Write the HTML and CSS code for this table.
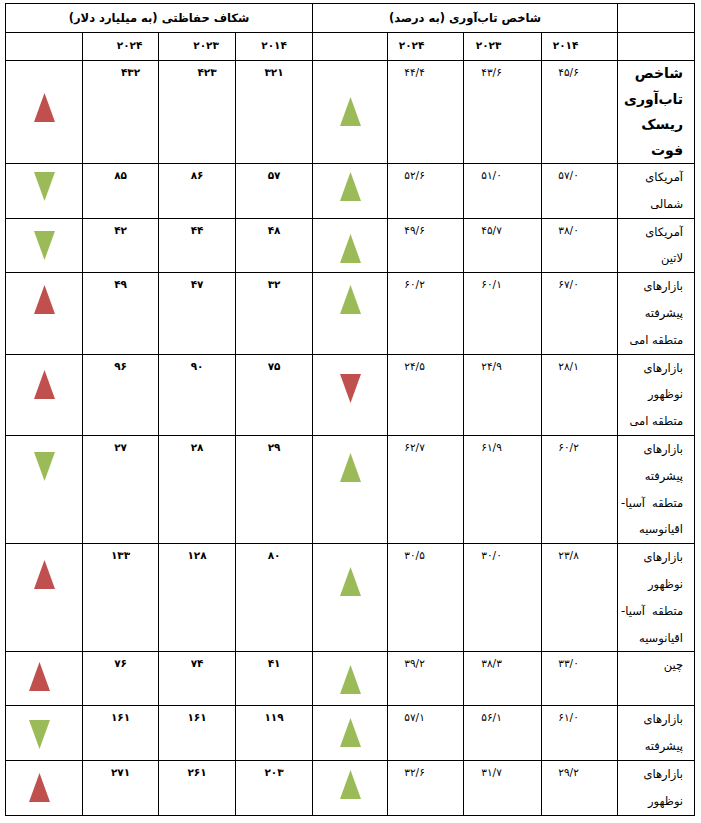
FILE: index.html
```html
<!DOCTYPE html>
<html lang="fa">
<head>
<meta charset="utf-8">
<title>شاخص تاب‌آوری</title>
<link rel="stylesheet" href="styles.css">
</head>
<body>
<table class="grid" dir="rtl">
  <colgroup>
    <col class="w77"><col class="w76"><col class="w78"><col class="w76"><col class="w75">
    <col class="w77"><col class="w77"><col class="w76"><col class="w77">
  </colgroup>
  <tr class="h1">
    <th></th>
    <th colspan="4" class="group">شاخص تاب‌آوری (به درصد)</th>
    <th colspan="4" class="group">شکاف حفاظتی (به میلیارد دلار)</th>
  </tr>
  <tr class="h2">
    <th></th>
    <th class="yr yr-r">۲۰۱۴</th><th class="yr yr-r">۲۰۲۳</th><th class="yr yr-r">۲۰۲۴</th>
    <th></th>
    <th class="yr">۲۰۱۴</th><th class="yr yr-s">۲۰۲۳</th><th class="yr yr-s">۲۰۲۴</th>
    <th></th>
  </tr>
  <tr>
    <td class="lbl lbl-b">شاخص<br>تاب‌آوری<br>ریسک<br>فوت</td>
    <td class="nr">۴۵/۶</td><td class="nr">۴۳/۶</td><td class="nr">۴۴/۴</td>
    <td class="arr p36"><svg class="tri g" viewBox="0 0 21 29"><polygon points="10.5,0 21,29 0,29"/></svg></td>
    <td class="nl">۳۲۱</td><td class="nl nl-s">۴۲۳</td><td class="nl nl-s">۴۳۲</td>
    <td class="arr p32"><svg class="tri r" viewBox="0 0 21 29"><polygon points="10.5,0 21,29 0,29"/></svg></td>
  </tr>
  <tr>
    <td class="lbl">آمریکای<br>شمالی</td>
    <td class="nr">۵۷/۰</td><td class="nr">۵۱/۰</td><td class="nr">۵۲/۶</td>
    <td class="arr p8"><svg class="tri g" viewBox="0 0 21 29"><polygon points="10.5,0 21,29 0,29"/></svg></td>
    <td class="nl">۵۷</td><td class="nl">۸۶</td><td class="nl">۸۵</td>
    <td class="arr p8"><svg class="tri g" viewBox="0 0 21 29"><polygon points="0,0 21,0 10.5,29"/></svg></td>
  </tr>
  <tr>
    <td class="lbl">آمریکای<br>لاتین</td>
    <td class="nr">۳۸/۰</td><td class="nr">۴۵/۷</td><td class="nr">۴۹/۶</td>
    <td class="arr p15"><svg class="tri g" viewBox="0 0 21 29"><polygon points="10.5,0 21,29 0,29"/></svg></td>
    <td class="nl">۴۸</td><td class="nl">۴۴</td><td class="nl">۴۲</td>
    <td class="arr p12"><svg class="tri g" viewBox="0 0 21 29"><polygon points="0,0 21,0 10.5,29"/></svg></td>
  </tr>
  <tr>
    <td class="lbl">بازارهای<br>پیشرفته<br>متطقه امی</td>
    <td class="nr">۶۷/۰</td><td class="nr">۶۰/۱</td><td class="nr">۶۰/۲</td>
    <td class="arr p12"><svg class="tri g" viewBox="0 0 21 29"><polygon points="10.5,0 21,29 0,29"/></svg></td>
    <td class="nl">۳۲</td><td class="nl">۴۷</td><td class="nl">۴۹</td>
    <td class="arr p12"><svg class="tri r" viewBox="0 0 21 29"><polygon points="10.5,0 21,29 0,29"/></svg></td>
  </tr>
  <tr>
    <td class="lbl">بازارهای<br>نوظهور<br>متطقه امی</td>
    <td class="nr">۲۸/۱</td><td class="nr">۲۴/۹</td><td class="nr">۲۴/۵</td>
    <td class="arr p19"><svg class="tri r" viewBox="0 0 21 29"><polygon points="0,0 21,0 10.5,29"/></svg></td>
    <td class="nl">۷۵</td><td class="nl">۹۰</td><td class="nl">۹۶</td>
    <td class="arr p15"><svg class="tri r" viewBox="0 0 21 29"><polygon points="10.5,0 21,29 0,29"/></svg></td>
  </tr>
  <tr>
    <td class="lbl">بازارهای<br>پیشرفته<br><span class="just">متطقه آسیا-</span>اقیانوسیه</td>
    <td class="nr">۶۰/۲</td><td class="nr">۶۱/۹</td><td class="nr">۶۲/۷</td>
    <td class="arr p17"><svg class="tri g" viewBox="0 0 21 29"><polygon points="10.5,0 21,29 0,29"/></svg></td>
    <td class="nl">۲۹</td><td class="nl">۲۸</td><td class="nl">۲۷</td>
    <td class="arr p16"><svg class="tri g" viewBox="0 0 21 29"><polygon points="0,0 21,0 10.5,29"/></svg></td>
  </tr>
  <tr>
    <td class="lbl">بازارهای<br>نوظهور<br><span class="just">متطقه آسیا-</span>اقیانوسیه</td>
    <td class="nr">۲۳/۸</td><td class="nr">۳۰/۰</td><td class="nr">۳۰/۵</td>
    <td class="arr p23"><svg class="tri g" viewBox="0 0 21 29"><polygon points="10.5,0 21,29 0,29"/></svg></td>
    <td class="nl">۸۰</td><td class="nl">۱۲۸</td><td class="nl">۱۳۳</td>
    <td class="arr p16"><svg class="tri r" viewBox="0 0 21 29"><polygon points="10.5,0 21,29 0,29"/></svg></td>
  </tr>
  <tr class="two">
    <td class="lbl">چین</td>
    <td class="nr">۳۳/۰</td><td class="nr">۳۸/۳</td><td class="nr">۳۹/۲</td>
    <td class="arr p13"><svg class="tri g" viewBox="0 0 21 29"><polygon points="10.5,0 21,29 0,29"/></svg></td>
    <td class="nl">۴۱</td><td class="nl">۷۴</td><td class="nl">۷۶</td>
    <td class="arr p10 shift"><svg class="tri r" viewBox="0 0 21 29"><polygon points="10.5,0 21,29 0,29"/></svg></td>
  </tr>
  <tr>
    <td class="lbl">بازارهای<br>پیشرفته</td>
    <td class="nr">۶۱/۰</td><td class="nr">۵۶/۱</td><td class="nr">۵۷/۱</td>
    <td class="arr p12"><svg class="tri g" viewBox="0 0 21 29"><polygon points="10.5,0 21,29 0,29"/></svg></td>
    <td class="nl">۱۱۹</td><td class="nl">۱۶۱</td><td class="nl">۱۶۱</td>
    <td class="arr p14 shift"><svg class="tri g" viewBox="0 0 21 29"><polygon points="0,0 21,0 10.5,29"/></svg></td>
  </tr>
  <tr>
    <td class="lbl">بازارهای<br>نوظهور</td>
    <td class="nr">۲۹/۲</td><td class="nr">۳۱/۷</td><td class="nr">۳۲/۶</td>
    <td class="arr p9"><svg class="tri g" viewBox="0 0 21 29"><polygon points="10.5,0 21,29 0,29"/></svg></td>
    <td class="nl">۲۰۳</td><td class="nl">۲۶۱</td><td class="nl">۲۷۱</td>
    <td class="arr p12 shift"><svg class="tri r" viewBox="0 0 21 29"><polygon points="10.5,0 21,29 0,29"/></svg></td>
  </tr>
</table>
</body>
</html>
```

FILE: styles.css
```css
html, body {
  margin: 0;
  padding: 0;
  background: #ffffff;
}

body {
  padding: 3px 0 0 5px;
  font-family: "DejaVu Sans", "Noto Sans", sans-serif;
  color: #000;
}

.grid {
  border-collapse: collapse;
  table-layout: fixed;
  width: 689px;
}

.w75 { width: 75px; }
.w76 { width: 76px; }
.w77 { width: 77px; }
.w78 { width: 78px; }

.grid th,
.grid td {
  border: 1px solid #000;
  padding: 0;
  vertical-align: top;
  font-weight: normal;
}

.h1 { height: 29px; }
.h2 { height: 28px; }

.grid .group {
  font-weight: bold;
  font-size: 11.5px;
  text-align: center;
  vertical-align: middle;
}

.grid .yr {
  font-size: 10.5px;
  font-weight: bold;
  text-align: center;
  padding-top: 6px;
}
.grid .yr-r { padding-right: 28px; }
.grid .yr-s { padding-left: 18px; }

.grid .lbl {
  font-size: 11.5px;
  line-height: 26.8px;
  text-align: right;
  padding: 0 11px 0 3px;
}
.grid .lbl-b {
  font-size: 14px;
  font-weight: bold;
  line-height: 25.5px;
}
.just {
  display: block;
  text-align: justify;
  text-align-last: justify;
}

.two { height: 54px; }

.grid .nr,
.grid .nl {
  font-size: 10.5px;
  line-height: 14px;
  text-align: center;
  padding-top: 4px;
}
.grid .nr { padding-right: 22px; }
.grid .nl { font-weight: bold; }
.grid .nl-s { padding-left: 20px; }

.grid .arr {
  line-height: 0;
  text-align: center;
}
.grid .arr.shift { padding-right: 10px; }

.tri {
  display: block;
  width: 21px;
  height: 29px;
  margin: 0 auto;
}
.tri.g { fill: #9bbb59; }
.tri.r { fill: #c0504d; }

.grid .p8 { padding-top: 8px; }
.grid .p9 { padding-top: 9px; }
.grid .p10 { padding-top: 10px; }
.grid .p12 { padding-top: 12px; }
.grid .p13 { padding-top: 13px; }
.grid .p14 { padding-top: 14px; }
.grid .p15 { padding-top: 15px; }
.grid .p16 { padding-top: 16px; }
.grid .p17 { padding-top: 17px; }
.grid .p19 { padding-top: 19px; }
.grid .p23 { padding-top: 23px; }
.grid .p32 { padding-top: 32px; }
.grid .p36 { padding-top: 36px; }
```
